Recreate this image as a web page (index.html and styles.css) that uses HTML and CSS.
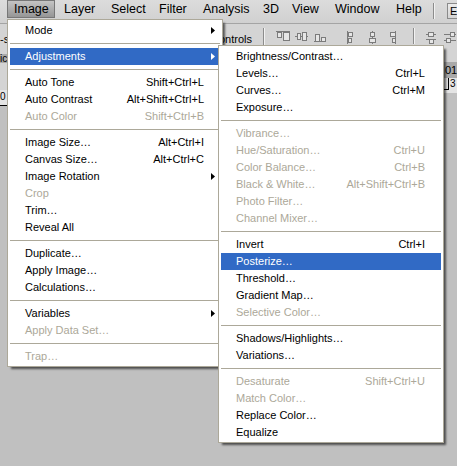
FILE: index.html
```html
<!DOCTYPE html>
<html>
<head>
<meta charset="utf-8">
<link rel="stylesheet" href="styles.css">
</head>
<body>
<div class="app">
  <div class="menubar">
    <span class="mb-item active">Image</span>
    <span class="mb-item">Layer</span>
    <span class="mb-item">Select</span>
    <span class="mb-item">Filter</span>
    <span class="mb-item">Analysis</span>
    <span class="mb-item">3D</span>
    <span class="mb-item">View</span>
    <span class="mb-item">Window</span>
    <span class="mb-item">Help</span>
    <span class="mb-sep"></span>
    <span class="mb-ws">E</span>
  </div>
  <div class="optbar">
    <span class="opt-clip">-s</span>
    <span class="opt-ctl">Show Transform Controls</span>
    <span class="opt-sep"></span>
    <svg class="opt-icons-a" width="140" height="16" viewBox="0 0 140 16">
      <g fill="#e6e6e6" stroke="#7b7b7b" stroke-width="1">
        <path d="M7 1.5H21" fill="none"/>
        <rect x="8.5" y="2.5" width="4" height="5"/>
        <rect x="14.5" y="2.5" width="6" height="8"/>
        <path d="M26 6.5H39" fill="none"/>
        <rect x="28.5" y="3.5" width="3" height="6"/>
        <rect x="33.5" y="2.5" width="4" height="8"/>
        <path d="M45 11.5H57" fill="none"/>
        <rect x="46.5" y="4.5" width="4" height="7"/>
        <rect x="52.5" y="7.5" width="4" height="4"/>
        <path d="M78.5 1V14" fill="none"/>
        <rect x="79.5" y="2.5" width="4" height="4"/>
        <rect x="79.5" y="8.5" width="3" height="4"/>
        <path d="M103.5 1V14" fill="none"/>
        <rect x="101.5" y="2.5" width="4" height="4"/>
        <rect x="100.5" y="8.5" width="6" height="4"/>
        <path d="M126.5 1V14" fill="none"/>
        <rect x="121.5" y="2.5" width="5" height="4"/>
        <rect x="123.5" y="8.5" width="3" height="4"/>
      </g>
    </svg>
    <span class="opt-sep2"></span>
    <svg class="opt-icons-c" width="37" height="16" viewBox="0 0 37 16">
      <g fill="#e6e6e6" stroke="#7b7b7b" stroke-width="1">
        <path d="M7 4.5H17M7 9.5H17" fill="none"/>
        <rect x="9.5" y="2.5" width="5" height="4"/>
        <rect x="10.5" y="9.5" width="4" height="4"/>
        <path d="M25 4.5H37M25 10.5H37" fill="none"/>
        <rect x="31.5" y="2.5" width="4" height="4"/>
        <rect x="27.5" y="8.5" width="4" height="4"/>
      </g>
    </svg>
  </div>
  <div class="work">
    <div class="lcol">
      <div class="l-a"></div>
      <div class="l-tab">ic</div>
      <div class="l-c"></div>
      <div class="l-ruler">0</div>
    </div>
    <div class="center"></div>
    <div class="rcol">
      <div class="r-a"></div>
      <div class="r-tab">01</div>
      <div class="r-ruler"><span class="r-tick"></span>3</div>
    </div>
  </div>
</div>

<div class="menu main-menu">
  <div class="mi"><span class="lbl">Mode</span><span class="sc"></span><span class="ar"><svg width="4" height="7" viewBox="0 0 4 7"><path d="M0 0L4 3.5L0 7Z"/></svg></span></div>
  <div class="sep"></div>
  <div class="mi hl"><span class="lbl">Adjustments</span><span class="sc"></span><span class="ar"><svg width="4" height="7" viewBox="0 0 4 7"><path d="M0 0L4 3.5L0 7Z"/></svg></span></div>
  <div class="sep"></div>
  <div class="mi"><span class="lbl">Auto Tone</span><span class="sc">Shift+Ctrl+L</span><span class="ar"></span></div>
  <div class="mi"><span class="lbl">Auto Contrast</span><span class="sc">Alt+Shift+Ctrl+L</span><span class="ar"></span></div>
  <div class="mi dis"><span class="lbl">Auto Color</span><span class="sc">Shift+Ctrl+B</span><span class="ar"></span></div>
  <div class="sep"></div>
  <div class="mi"><span class="lbl">Image Size…</span><span class="sc">Alt+Ctrl+I</span><span class="ar"></span></div>
  <div class="mi"><span class="lbl">Canvas Size…</span><span class="sc">Alt+Ctrl+C</span><span class="ar"></span></div>
  <div class="mi"><span class="lbl">Image Rotation</span><span class="sc"></span><span class="ar"><svg width="4" height="7" viewBox="0 0 4 7"><path d="M0 0L4 3.5L0 7Z"/></svg></span></div>
  <div class="mi dis"><span class="lbl">Crop</span><span class="sc"></span><span class="ar"></span></div>
  <div class="mi"><span class="lbl">Trim…</span><span class="sc"></span><span class="ar"></span></div>
  <div class="mi"><span class="lbl">Reveal All</span><span class="sc"></span><span class="ar"></span></div>
  <div class="sep"></div>
  <div class="mi"><span class="lbl">Duplicate…</span><span class="sc"></span><span class="ar"></span></div>
  <div class="mi"><span class="lbl">Apply Image…</span><span class="sc"></span><span class="ar"></span></div>
  <div class="mi"><span class="lbl">Calculations…</span><span class="sc"></span><span class="ar"></span></div>
  <div class="sep"></div>
  <div class="mi"><span class="lbl">Variables</span><span class="sc"></span><span class="ar"><svg width="4" height="7" viewBox="0 0 4 7"><path d="M0 0L4 3.5L0 7Z"/></svg></span></div>
  <div class="mi dis"><span class="lbl">Apply Data Set…</span><span class="sc"></span><span class="ar"></span></div>
  <div class="sep"></div>
  <div class="mi dis"><span class="lbl">Trap…</span><span class="sc"></span><span class="ar"></span></div>
</div>

<div class="menu sub-menu">
  <div class="mi"><span class="lbl">Brightness/Contrast…</span><span class="sc"></span><span class="ar"></span></div>
  <div class="mi"><span class="lbl">Levels…</span><span class="sc">Ctrl+L</span><span class="ar"></span></div>
  <div class="mi"><span class="lbl">Curves…</span><span class="sc">Ctrl+M</span><span class="ar"></span></div>
  <div class="mi"><span class="lbl">Exposure…</span><span class="sc"></span><span class="ar"></span></div>
  <div class="sep"></div>
  <div class="mi dis"><span class="lbl">Vibrance…</span><span class="sc"></span><span class="ar"></span></div>
  <div class="mi dis"><span class="lbl">Hue/Saturation…</span><span class="sc">Ctrl+U</span><span class="ar"></span></div>
  <div class="mi dis"><span class="lbl">Color Balance…</span><span class="sc">Ctrl+B</span><span class="ar"></span></div>
  <div class="mi dis"><span class="lbl">Black &amp; White…</span><span class="sc">Alt+Shift+Ctrl+B</span><span class="ar"></span></div>
  <div class="mi dis"><span class="lbl">Photo Filter…</span><span class="sc"></span><span class="ar"></span></div>
  <div class="mi dis"><span class="lbl">Channel Mixer…</span><span class="sc"></span><span class="ar"></span></div>
  <div class="sep"></div>
  <div class="mi"><span class="lbl">Invert</span><span class="sc">Ctrl+I</span><span class="ar"></span></div>
  <div class="mi hl"><span class="lbl">Posterize…</span><span class="sc"></span><span class="ar"></span></div>
  <div class="mi"><span class="lbl">Threshold…</span><span class="sc"></span><span class="ar"></span></div>
  <div class="mi"><span class="lbl">Gradient Map…</span><span class="sc"></span><span class="ar"></span></div>
  <div class="mi dis"><span class="lbl">Selective Color…</span><span class="sc"></span><span class="ar"></span></div>
  <div class="sep"></div>
  <div class="mi"><span class="lbl">Shadows/Highlights…</span><span class="sc"></span><span class="ar"></span></div>
  <div class="mi"><span class="lbl">Variations…</span><span class="sc"></span><span class="ar"></span></div>
  <div class="sep"></div>
  <div class="mi dis"><span class="lbl">Desaturate</span><span class="sc">Shift+Ctrl+U</span><span class="ar"></span></div>
  <div class="mi dis"><span class="lbl">Match Color…</span><span class="sc"></span><span class="ar"></span></div>
  <div class="mi"><span class="lbl">Replace Color…</span><span class="sc"></span><span class="ar"></span></div>
  <div class="mi"><span class="lbl">Equalize</span><span class="sc"></span><span class="ar"></span></div>
</div>
</body>
</html>
```

FILE: styles.css
```css
* { box-sizing: border-box; margin: 0; padding: 0; }
html, body { width: 457px; height: 466px; overflow: hidden; }
body {
  background: #c0c0c0;
  font-family: "Liberation Sans", Arial, sans-serif;
  font-size: 11px;
  color: #000;
  position: relative;
}
.app { display: flex; flex-direction: column; height: 466px; }

/* menu bar */
.menubar {
  height: 24px;
  display: grid;
  grid-template-columns: 50px 47px 48px 44px 60px 29px 43px 61px 44px 14px auto;
  padding-left: 7px;
  background: linear-gradient(#dcdcdc, #d0d0d0);
  border-bottom: 1px solid #a4a4a4;
  font-size: 12.5px;
}
.mb-item { padding-left: 7px; line-height: 18px; white-space: nowrap; }
.mb-item.active {
  width: 48px;
  height: 18px;
  padding-left: 6px;
  line-height: 16px;
  background: linear-gradient(#c4c4c4, #969696);
  border: 1px solid #777;
}
.mb-sep {
  width: 2px; height: 16px; margin-top: 3px;
  border-left: 1px solid #8c8c8c; border-right: 1px solid #f2f2f2;
}
.mb-ws {
  margin-top: 3px; height: 16px;
  border: 1px solid #8a8a8a; border-right: 0;
  background: linear-gradient(#ececec, #d4d4d4);
  padding-left: 2px; line-height: 14px; font-size: 11px;
}

/* options bar */
.optbar {
  height: 26px;
  display: flex;
  align-items: flex-start;
  background: #d4d4d4;
  white-space: nowrap;
}
.opt-clip { width: 8px; overflow: hidden; margin-top: 9px; line-height: 13px; }
.opt-ctl { flex: 0 0 244px; text-align: right; margin-top: 9px; line-height: 13px; overflow: hidden; }
.opt-sep {
  width: 2px; height: 17px; margin: 4px 0 0 11px;
  border-left: 1px solid #8c8c8c; border-right: 1px solid #f2f2f2;
}
.opt-icons-a { margin: 6px 0 0 4px; flex: none; }
.opt-sep2 {
  width: 2px; height: 16px; margin: 4px 0 0 4px;
  border-left: 1px solid #8c8c8c; border-right: 1px solid #f2f2f2;
}
.opt-icons-c { margin: 6px 0 0 4px; flex: none; }

/* workspace */
.work { flex: 1; display: flex; }
.lcol { width: 8px; display: flex; flex-direction: column; overflow: hidden; }
.l-a { height: 4px; background: #d4d4d4; }
.l-tab { height: 9px; background: #a9a9a9; line-height: 9px; font-size: 10px; white-space: nowrap; }
.l-c { height: 27px; background: #d4d4d4; }
.l-ruler {
  height: 16px; background: #e4e4e4; font-size: 10px; line-height: 13px;
  border-bottom: 1px solid #000;
}
.center { flex: 1; }
.rcol { width: 13px; display: flex; flex-direction: column; overflow: hidden; }
.r-a { height: 12px; background: #d4d4d4; }
.r-tab { height: 16px; background: #a9a9a9; line-height: 16px; padding-left: 1px; white-space: nowrap; }
.r-ruler {
  height: 15px; background: #e4e4e4; display: flex; font-size: 10px; line-height: 12px;
}
.r-tick { width: 5px; height: 12px; border-right: 1px solid #000; border-bottom: 1px solid #000; margin-right: 1px; }

/* menus */
.menu {
  position: absolute;
  background: #fff;
  border: 1px solid #aca899;
  padding: 2px 2px 1px;
  box-shadow: 3px 3px 2px -1px rgba(0, 0, 0, 0.6);
}
.main-menu { left: 7px; top: 19px; width: 216px; }
.sub-menu { left: 218px; top: 45px; width: 226px; }
.mi {
  display: flex;
  align-items: center;
  height: 17px;
  line-height: 17px;
  padding-left: 15px;
  white-space: nowrap;
}
.mi .lbl { flex: 1; }
.mi .ar { width: 16px; flex: none; display: flex; align-items: center; padding-left: 7px; }
.mi .ar svg { fill: currentColor; display: block; }
.mi.hl { background: #316ac5; color: #fff; }
.mi.dis { color: #aca899; }
.sep { height: 1px; background: #aca899; margin: 4px 0; }
```
